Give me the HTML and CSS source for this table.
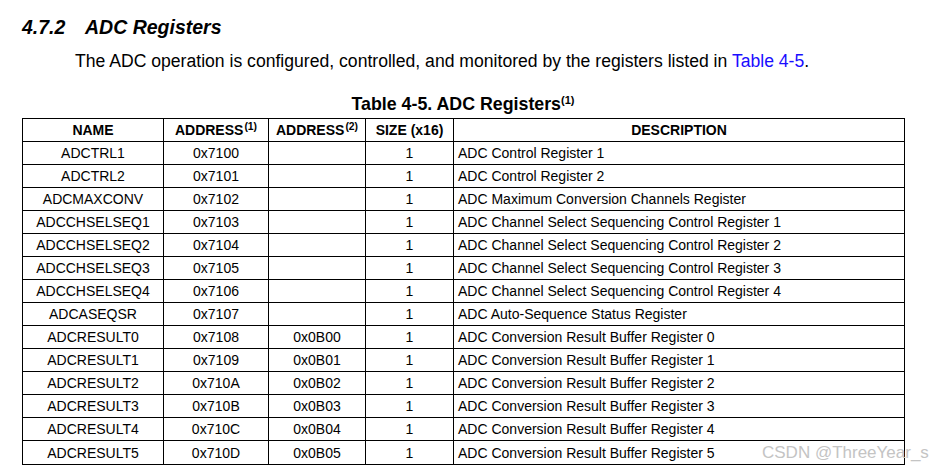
FILE: index.html
```html
<!DOCTYPE html>
<html>
<head>
<meta charset="utf-8">
<link rel="stylesheet" href="styles.css">
</head>
<body>
<div class="page">
  <h2 class="section"><span class="num">4.7.2</span><span class="ttl">ADC Registers</span></h2>
  <p class="intro">The ADC operation is configured, controlled, and monitored by the registers listed in <a class="ref">Table 4-5</a>.</p>
  <div class="caption">Table 4-5. ADC Registers<sup>(1)</sup></div>
  <table class="regs">
    <colgroup>
      <col class="c1"><col class="c2"><col class="c3"><col class="c4"><col class="c5">
    </colgroup>
    <thead>
      <tr><th>NAME</th><th>ADDRESS<sup>(1)</sup></th><th>ADDRESS<sup>(2)</sup></th><th>SIZE (x16)</th><th>DESCRIPTION</th></tr>
    </thead>
    <tbody>
      <tr><td>ADCTRL1</td><td>0x7100</td><td></td><td>1</td><td class="d">ADC Control Register 1</td></tr>
      <tr><td>ADCTRL2</td><td>0x7101</td><td></td><td>1</td><td class="d">ADC Control Register 2</td></tr>
      <tr><td>ADCMAXCONV</td><td>0x7102</td><td></td><td>1</td><td class="d">ADC Maximum Conversion Channels Register</td></tr>
      <tr><td>ADCCHSELSEQ1</td><td>0x7103</td><td></td><td>1</td><td class="d">ADC Channel Select Sequencing Control Register 1</td></tr>
      <tr><td>ADCCHSELSEQ2</td><td>0x7104</td><td></td><td>1</td><td class="d">ADC Channel Select Sequencing Control Register 2</td></tr>
      <tr><td>ADCCHSELSEQ3</td><td>0x7105</td><td></td><td>1</td><td class="d">ADC Channel Select Sequencing Control Register 3</td></tr>
      <tr><td>ADCCHSELSEQ4</td><td>0x7106</td><td></td><td>1</td><td class="d">ADC Channel Select Sequencing Control Register 4</td></tr>
      <tr><td>ADCASEQSR</td><td>0x7107</td><td></td><td>1</td><td class="d">ADC Auto-Sequence Status Register</td></tr>
      <tr><td>ADCRESULT0</td><td>0x7108</td><td>0x0B00</td><td>1</td><td class="d">ADC Conversion Result Buffer Register 0</td></tr>
      <tr><td>ADCRESULT1</td><td>0x7109</td><td>0x0B01</td><td>1</td><td class="d">ADC Conversion Result Buffer Register 1</td></tr>
      <tr><td>ADCRESULT2</td><td>0x710A</td><td>0x0B02</td><td>1</td><td class="d">ADC Conversion Result Buffer Register 2</td></tr>
      <tr><td>ADCRESULT3</td><td>0x710B</td><td>0x0B03</td><td>1</td><td class="d">ADC Conversion Result Buffer Register 3</td></tr>
      <tr><td>ADCRESULT4</td><td>0x710C</td><td>0x0B04</td><td>1</td><td class="d">ADC Conversion Result Buffer Register 4</td></tr>
      <tr><td>ADCRESULT5</td><td>0x710D</td><td>0x0B05</td><td>1</td><td class="d">ADC Conversion Result Buffer Register 5</td></tr>
    </tbody>
  </table>
  <div class="watermark">CSDN @ThreeYear_s</div>
</div>
</body>
</html>
```
FILE: styles.css
```css
html, body {
  margin: 0;
  padding: 0;
  background: #fff;
}
body {
  font-family: "Liberation Sans", Arial, sans-serif;
  color: #000;
}
.page {
  position: relative;
  width: 929px;
  height: 470px;
  overflow: hidden;
  padding: 0 0 0 22px;
  box-sizing: border-box;
}
.section {
  margin: 0;
  padding-top: 15px;
  font-size: 19.5px;
  line-height: 24px;
  font-weight: bold;
  font-style: italic;
  display: flex;
}
.section .num {
  width: 63px;
}
.intro {
  margin: 12px 0 0 53px;
  font-size: 17.6px;
  line-height: 20px;
}
.ref {
  color: #1a0dff;
}
.caption {
  margin-top: 23px;
  text-align: center;
  font-weight: bold;
  font-size: 17.8px;
  line-height: 20px;
  width: 882px;
}
.caption sup {
  font-size: 0.62em;
  vertical-align: 0.55em;
  line-height: 0;
}
th sup {
  font-size: 0.74em;
  vertical-align: 0.5em;
  line-height: 0;
  margin-left: 1px;
}
.regs {
  margin-top: 4px;
  border-collapse: collapse;
  width: 882px;
  table-layout: fixed;
  font-size: 14px;
}
.c1 { width: 141px; }
.c2 { width: 105px; }
.c3 { width: 97px; }
.c4 { width: 88px; }
.c5 { width: 451px; }
.regs th, .regs td {
  border: 1px solid #000;
  height: 22px;
  padding: 0 4px;
  text-align: center;
  line-height: 22px;
  white-space: nowrap;
}
.regs tbody tr:last-child td {
  height: 23px;
}
.regs th {
  font-weight: bold;
}
.regs td.d {
  text-align: left;
}
.watermark {
  position: absolute;
  left: 762px;
  top: 443px;
  font-size: 17px;
  white-space: nowrap;
  color: #c4c4c4;
}
```
